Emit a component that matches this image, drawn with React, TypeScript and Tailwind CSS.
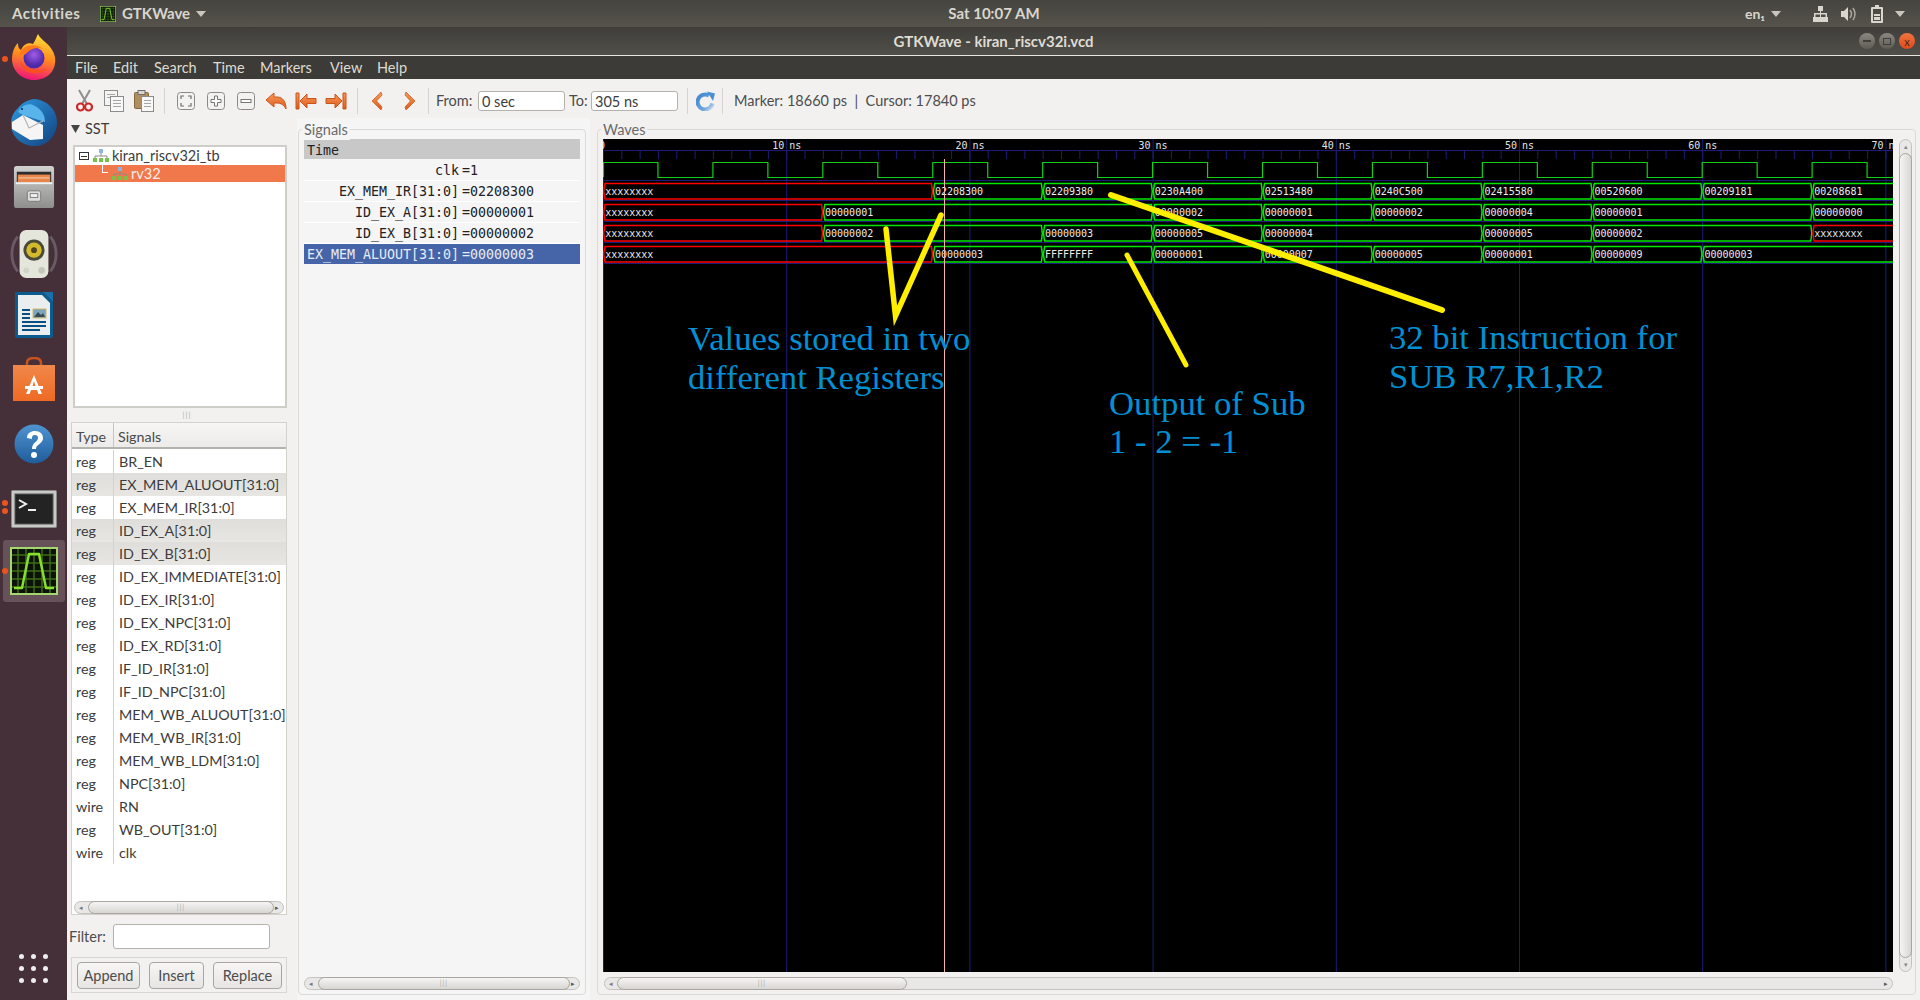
import React from "react";

const nsX = (t: number) => 18.32 * t;
type Seg = [number, number, string];
const rows: { y: number; segs: Seg[] }[] = [
  { y: 44.5, segs: [[0, 18, "xxxxxxxx"], [18, 24, "02208300"], [24, 30, "02209380"], [30, 36, "0230A400"], [36, 42, "02513480"], [42, 48, "0240C500"], [48, 54, "02415580"], [54, 60, "00520600"], [60, 66, "00209181"], [66, 74, "00208681"]] },
  { y: 65.5, segs: [[0, 12, "xxxxxxxx"], [12, 30, "00000001"], [30, 36, "00000002"], [36, 42, "00000001"], [42, 48, "00000002"], [48, 54, "00000004"], [54, 66, "00000001"], [66, 74, "00000000"]] },
  { y: 86.5, segs: [[0, 12, "xxxxxxxx"], [12, 24, "00000002"], [24, 30, "00000003"], [30, 36, "00000005"], [36, 48, "00000004"], [48, 54, "00000005"], [54, 66, "00000002"], [66, 74, "xxxxxxxx"]] },
  { y: 107.5, segs: [[0, 18, "xxxxxxxx"], [18, 24, "00000003"], [24, 30, "FFFFFFFF"], [30, 36, "00000001"], [36, 42, "00000007"], [42, 48, "00000005"], [48, 54, "00000001"], [54, 60, "00000009"], [60, 74, "00000003"]] },
];

function Waves() {
  const W = 1290;
  const H = 833;
  const navy = "#1c1c78";
  let clock = `M0.5 38 L0.5 23.5`;
  for (let i = 0; i < 24; i++) {
    const a = 3 * i;
    const x = nsX(a + 3);
    clock += i % 2 === 0 ? ` L${x} 23.5 L${x} 38.5` : ` L${x} 38.5 L${x} 23.5`;
  }
  const ticks = Array.from({ length: 71 }, (_, i) => nsX(i));
  const tens = [1, 2, 3, 4, 5, 6, 7];
  return (
    <svg width={W} height={H} viewBox={`0 0 ${W} ${H}`} className="block bg-black shrink-0">
      {[0, ...tens].map((t) => (
        <line key={t} x1={nsX(t * 10) + 0.5} x2={nsX(t * 10) + 0.5} y1={0} y2={H} stroke={navy} />
      ))}
      <line x1={0} x2={W} y1={11.5} y2={11.5} stroke={navy} />
      {ticks.map((x, i) => (
        <line key={i} x1={x + 0.5} x2={x + 0.5} y1={11} y2={20} stroke={navy} />
      ))}
      {[41.5, 61.5, 82.5, 103.5, 124.5].map((y) => (
        <line key={y} x1={0} x2={W} y1={y} y2={y} stroke={navy} />
      ))}
      {tens.map((t) => (
        <text key={t} y={9.5} fill="#e4e4e4" fontSize={10} fontFamily="'DejaVu Sans Mono',monospace">
          <tspan x={nsX(t * 10) - 14}>{t * 10}</tspan>
          <tspan x={nsX(t * 10) + 3}>ns</tspan>
        </text>
      ))}
      <text x={-4} y={9.5} fill="#e4e4e4" fontSize={10} fontFamily="'DejaVu Sans Mono',monospace">0</text>
      <path d={clock} fill="none" stroke="#14d014" strokeWidth={1.2} />
      {rows.map((r, ri) => (
        <g key={ri}>
          {r.segs.map(([a, b, t], i) => {
            const x0 = nsX(a);
            const x1 = nsX(b);
            const top = r.y;
            const bot = r.y + 15.5;
            const mid = (top + bot) / 2;
            const isX = t === "xxxxxxxx";
            const d = `M${x0 + 0.7} ${mid} L${x0 + 2} ${top} L${x1 - 1.3} ${top} L${x1 - 0.3} ${mid} L${x1 - 1.3} ${bot} L${x0 + 2} ${bot} Z`;
            return (
              <g key={i}>
                <path d={d} fill="none" stroke={isX ? "#ff0000" : "#00e800"} strokeWidth={1.5} />
                <text x={x0 + 2.2} y={top + 11} fill="#ececec" fontSize={10} fontFamily="'DejaVu Sans Mono',monospace">{t}</text>
              </g>
            );
          })}
        </g>
      ))}
      <line x1={341.5} x2={341.5} y1={20} y2={H} stroke="#f4b4a8" />
      <g stroke="#ffee00" fill="none" strokeLinecap="round" strokeLinejoin="miter">
        <path d="M283 90 L292.500 177 L338 76" strokeWidth={5.5} />
        <path d="M524 116 L583 226" strokeWidth={5} />
        <path d="M508 56 L839 171" strokeWidth={6} />
      </g>
    </svg>
  );
}

function HScroll({ thumbStart, thumbEnd, className }: { thumbStart: number; thumbEnd: number; className: string }) {
  return (
    <div className={`h-[13px] rounded-full border border-[#c4c2bd] bg-[#e9e8e6] flex items-center relative ${className}`}>
      <div className="text-[#777] text-[7px] leading-none pl-[4px]" style={{ width: thumbStart }}>◂</div>
      <div className="h-[13px] -my-px rounded-full border border-[#a9a69f] bg-gradient-to-b from-[#f6f5f4] to-[#d8d6d2] flex items-center justify-center" style={{ width: thumbEnd - thumbStart }}>
        <span className="text-[#aaa] text-[7px] leading-none tracking-[1px]">|||</span>
      </div>
      <div className="flex-1 text-[#555] text-[7px] leading-none text-right pr-[4px]">▸</div>
    </div>
  );
}

const Caret = ({ className }: { className: string }) => (
  <svg width="10" height="6" viewBox="0 0 10 6" className={`shrink-0 ${className}`}><path d="M0 0 H10 L5 6Z" fill="#c9c6bd" /></svg>
);

function Firefox() {
  return (
    <svg width="46" height="48" viewBox="0 0 46 48">
      <defs>
        <linearGradient id="ffa" x1="0.6" y1="0" x2="0.4" y2="1"><stop offset="0" stopColor="#ffe03a" /><stop offset="0.5" stopColor="#ff8a1e" /><stop offset="1" stopColor="#f0127a" /></linearGradient>
        <radialGradient id="ffb" cx="0.5" cy="0.35"><stop offset="0" stopColor="#a35ae8" /><stop offset="1" stopColor="#4f2aa8" /></radialGradient>
      </defs>
      <path d="M27 1 C30 8 41 11 44 24 C46 38 36 47 23 47 C10 47 1 37 1 26 C1 20 3 14 7 10 C7 14 8 16 10 17 C12 12 17 9 22 11 C24 8 25 5 27 1Z" fill="url(#ffa)" />
      <circle cx="23" cy="25" r="10.500" fill="url(#ffb)" />
      <path d="M8 21 C12 12 24 9 32 16 C27 14 22 15 18 18 C15 21 12 24 8 21Z" fill="#ff7a1c" />
      <path d="M9 28 C11 40 26 45 37 35 C28 39 16 38 9 28Z" fill="#f9501e" />
    </svg>
  );
}
function Thunderbird() {
  return (
    <svg width="50" height="50" viewBox="0 0 50 50">
      <defs><linearGradient id="tba" x1="0" y1="0" x2="1" y2="1"><stop offset="0" stopColor="#2e9be0" /><stop offset="1" stopColor="#12407f" /></linearGradient></defs>
      <path d="M25 1 C40 2 49 14 48 26 C47 40 36 49 24 48 C11 47 1 37 2 24 C3 16 6 13 9 10 C13 5 18 2 25 1Z" fill="url(#tba)" />
      <path d="M9 14 C13 7 20 4 26 8 C33 12 36 17 36 24 L14 17Z" fill="#58b4ea" />
      <path d="M3 24 L14 17 L34 27 L34 41 L21 42 L3 31Z" fill="#f5f5f5" />
      <path d="M14 17 L20 30 L34 23" fill="none" stroke="#b4b4b4" strokeWidth="1.200" />
      <circle cx="13" cy="11" r="1" fill="#0f2e50" />
    </svg>
  );
}
function Files() {
  return (
    <svg width="42" height="44" viewBox="0 0 44 46">
      <defs><linearGradient id="fia" x1="0" y1="0" x2="0" y2="1"><stop offset="0" stopColor="#d2d2d0" /><stop offset="1" stopColor="#8e8e8c" /></linearGradient></defs>
      <rect x="1" y="1" width="42" height="44" rx="3" fill="url(#fia)" />
      <rect x="4" y="7" width="36" height="11" fill="#2e2e2e" />
      <rect x="5" y="10" width="34" height="8" fill="#e8864a" />
      <rect x="6" y="13" width="32" height="1" fill="#f6d6b6" />
      <rect x="3" y="18" width="38" height="2" fill="#f2f2f2" />
      <rect x="15" y="27" width="14" height="11" rx="2" fill="#dcdcdc" stroke="#7a7a7a" />
      <rect x="18" y="30" width="8" height="4" fill="#eeeeee" stroke="#666" strokeWidth="0.800" />
    </svg>
  );
}
function Rhythmbox() {
  return (
    <svg width="48" height="50" viewBox="0 0 48 52">
      <path d="M7 8 C-1 18 -1 34 7 44 M41 8 C49 18 49 34 41 44" stroke="#6b5a66" strokeWidth="3" fill="none" />
      <rect x="9" y="1" width="30" height="50" rx="7" fill="#e4e6dc" />
      <circle cx="24" cy="22" r="11" fill="#4a4a3a" />
      <circle cx="24" cy="22" r="8" fill="#d4b92a" />
      <circle cx="24" cy="22" r="3" fill="#4a4520" />
      <circle cx="32" cy="43" r="3.500" fill="#c4c6bc" />
      <circle cx="16" cy="43" r="3" fill="#d2d4ca" />
    </svg>
  );
}
function Writer() {
  return (
    <svg width="40" height="48" viewBox="0 0 40 48">
      <path d="M2 1 H29 L39 11 V45 Q39 47 37 47 H3 Q1 47 1 45 V2 Q1 1 2 1Z" fill="#0b5b8f" />
      <path d="M4 4 H28 L36 12 V44 H4 Z" fill="#eaeeef" />
      <path d="M29 1 H39 V11Z" fill="#1a6fa8" />
      <rect x="8" y="18" width="8" height="2" fill="#0b4f80" />
      <rect x="8" y="22" width="8" height="2" fill="#0b4f80" />
      <rect x="8" y="26" width="8" height="2" fill="#0b4f80" />
      <rect x="8" y="30" width="24" height="2" fill="#0b4f80" />
      <rect x="8" y="34" width="24" height="2" fill="#0b4f80" />
      <rect x="8" y="38" width="18" height="2" fill="#0b4f80" />
      <rect x="19" y="18" width="13" height="9" fill="#7ea6bc" stroke="#d8b24a" strokeWidth="0.8" />
      <path d="M20 26 L24 21 L27 24 L29 22 L31 26Z" fill="#3a4a55" />
    </svg>
  );
}
function Software() {
  return (
    <svg width="42" height="44" viewBox="0 0 42 44">
      <defs><linearGradient id="swa" x1="0" y1="0" x2="0" y2="1"><stop offset="0" stopColor="#f0884a" /><stop offset="1" stopColor="#ee6a24" /></linearGradient></defs>
      <path d="M14 10 V6 Q14 1 21 1 Q28 1 28 6 V10" fill="none" stroke="#c9531e" strokeWidth="2.500" />
      <rect x="0" y="8" width="42" height="36" fill="url(#swa)" />
      <path d="M21 18 L13 37 H16.500 L18 33 H24 L25.500 37 H29 Z M19.500 29 L21 24 L22.500 29Z" fill="#fff" fillRule="evenodd" />
      <rect x="12" y="29" width="18" height="3" fill="#fff" />
    </svg>
  );
}
function Help() {
  return (
    <svg width="40" height="40" viewBox="0 0 40 40">
      <defs><linearGradient id="hea" x1="0" y1="0" x2="0" y2="1"><stop offset="0" stopColor="#4f94d0" /><stop offset="1" stopColor="#1f5c9c" /></linearGradient></defs>
      <circle cx="20" cy="20" r="19.500" fill="url(#hea)" />
      <path d="M13 14 C13 9 17 7 21 7 C26 7 29 10 29 14 C29 20 22 20 22 25 H18 C18 18 24 18 24 14 C24 12 23 11 21 11 C18 11 18 13 18 15 Z" fill="#fff" />
      <circle cx="20" cy="31" r="3" fill="#fff" />
    </svg>
  );
}
function Terminal() {
  return (
    <svg width="46" height="38" viewBox="0 0 46 38">
      <rect x="0.500" y="0.500" width="45" height="37" rx="1" fill="#c9c9c7" stroke="#8a8a88" />
      <rect x="4" y="4" width="38" height="30" fill="#232323" stroke="#555" />
      <path d="M8 10 L15 14 L8 18" fill="none" stroke="#f0f0f0" strokeWidth="2" />
      <rect x="17" y="19" width="8" height="2" fill="#f0f0f0" />
    </svg>
  );
}
function GtkIcon({ size }: { size: number }) {
  const g = [8, 16, 24, 32, 40];
  return (
    <svg width={size} height={size} viewBox="0 0 48 48" className="shrink-0">
      <rect x="0" y="0" width="48" height="48" fill="#a6d76e" />
      <rect x="2" y="2" width="44" height="44" fill="#0c1208" />
      {g.map((v) => <g key={v}><line x1={v} x2={v} y1="2" y2="46" stroke="#3c6c14" strokeWidth="1.500" /><line y1={v} y2={v} x1="2" x2="46" stroke="#3c6c14" strokeWidth="1.500" /></g>)}
      <path d="M4 41 H12 L19 7 H29 L36 41 H44" fill="none" stroke="#84e02c" strokeWidth="2.500" strokeLinejoin="round" />
    </svg>
  );
}

const Grad = ({ id }: { id: string }) => (
  <defs><linearGradient id={id} x1="0" y1="0" x2="0" y2="1"><stop offset="0" stopColor="#f79a5c" /><stop offset="1" stopColor="#dd5a1a" /></linearGradient></defs>
);
const Arrow = ({ d, id }: { d: string; id: string }) => (
  <svg width="22" height="18" viewBox="0 0 22 18" className="shrink-0"><Grad id={id} /><path d={d} fill={`url(#${id})`} stroke="#c9551c" strokeWidth="1" strokeLinejoin="round" /></svg>
);
const Chevron = ({ flip, id }: { flip?: boolean; id: string }) => (
  <svg width="12" height="20" viewBox="0 0 12 20" className="shrink-0"><Grad id={id} /><path d={flip ? "M2 1 L11 10 L2 19 L1 16 L6.500 10 L1 4Z" : "M10 1 L1 10 L10 19 L11 16 L5.500 10 L11 4Z"} fill={`url(#${id})`} stroke="#d2601f" strokeWidth="0.800" strokeLinejoin="round" /></svg>
);
const ZoomBtn = ({ kind }: { kind: "fit" | "in" | "out" }) => (
  <svg width="18" height="18" viewBox="0 0 18 18" className="shrink-0">
    <rect x="0.500" y="0.500" width="17" height="17" rx="3" fill="#f2f2f0" stroke="#8c8a86" />
    {kind === "fit" && <path d="M4 7 V4 H7 M11 4 H14 V7 M14 11 V14 H11 M7 14 H4 V11" fill="none" stroke="#6f6e6b" strokeWidth="1.200" />}
    {kind === "in" && <path d="M7.500 4 H10.500 V7.500 H14 V10.500 H10.500 V14 H7.500 V10.500 H4 V7.500 H7.500Z" fill="#fdfdfd" stroke="#77756f" />}
    {kind === "out" && <rect x="4" y="7.500" width="10" height="3" fill="#fdfdfd" stroke="#77756f" />}
  </svg>
);
const DocLines = () => (
  <g stroke="#a5a5a5" strokeWidth="1"><line x1="10" x2="17" y1="10.500" y2="10.500" /><line x1="10" x2="17" y1="13.500" y2="13.500" /><line x1="10" x2="17" y1="16.500" y2="16.500" /></g>
);
const Sep = ({ className }: { className: string }) => <div className={`w-px h-[26px] bg-[#d6d4d0] shrink-0 ${className}`} />;

const list: [string, string, boolean][] = [
  ["reg", "BR_EN", false], ["reg", "EX_MEM_ALUOUT[31:0]", true], ["reg", "EX_MEM_IR[31:0]", false], ["reg", "ID_EX_A[31:0]", true], ["reg", "ID_EX_B[31:0]", true],
  ["reg", "ID_EX_IMMEDIATE[31:0]", false], ["reg", "ID_EX_IR[31:0]", false], ["reg", "ID_EX_NPC[31:0]", false], ["reg", "ID_EX_RD[31:0]", false], ["reg", "IF_ID_IR[31:0]", false],
  ["reg", "IF_ID_NPC[31:0]", false], ["reg", "MEM_WB_ALUOUT[31:0]", false], ["reg", "MEM_WB_IR[31:0]", false], ["reg", "MEM_WB_LDM[31:0]", false], ["reg", "NPC[31:0]", false],
  ["wire", "RN", false], ["reg", "WB_OUT[31:0]", false], ["wire", "clk", false],
];
const values: [string, string][] = [["clk", "=1"], ["EX_MEM_IR[31:0]", "=02208300"], ["ID_EX_A[31:0]", "=00000001"], ["ID_EX_B[31:0]", "=00000002"]];

const Hier = () => (
  <svg width="16" height="14" viewBox="0 0 16 14" className="shrink-0">
    <rect x="6" y="0" width="4" height="4" fill="#8fb4e0" />
    <path d="M8 4 V7 M2 9 V7 H14 V9" stroke="#8a8a8a" fill="none" />
    <rect x="0" y="9" width="4" height="4" fill="#79c24a" /><rect x="6" y="9" width="4" height="4" fill="#79c24a" /><rect x="12" y="9" width="4" height="4" fill="#79c24a" />
  </svg>
);

export default function App() {
  return (
    <div className="w-[1920px] h-[1000px] overflow-hidden flex flex-col font-['Lato','Noto_Sans',sans-serif] text-[#3c3c3c] relative">
      <div className="h-[27px] shrink-0 bg-gradient-to-b from-[#45443f] to-[#55534c] flex items-center text-[#d9d6cd] text-[15px] font-bold pl-[12px] pr-[15px] relative">
        <span className="w-[88px] tracking-[0.6px]">Activities</span>
        <GtkIcon size={16} />
        <span className="ml-[6px]">GTKWave</span>
        <Caret className="ml-[6px]" />
        <span className="absolute left-[948px] w-[92px] text-center">Sat 10:07 AM</span>
        <div className="ml-auto flex items-center">
          <span className="text-[14px]">en₁</span>
          <Caret className="ml-[6px]" />
          <svg width="15" height="16" viewBox="0 0 15 16" className="ml-[32px]"><path d="M5 0 H10 V5 H8 V7 H14 V11 H15 V16 H10 V11 H12.500 V8.500 H8 V11 H10 V16 H5 V11 H7 V8.500 H2.500 V11 H5 V16 H0 V11 H1 V7 H7 V5 H5Z" fill="#d9d6cd" /></svg>
          <svg width="15" height="14" viewBox="0 0 15 14" className="ml-[13px]"><path d="M0 4 H3 L7 0 V14 L3 10 H0Z" fill="#d9d6cd" /><path d="M9 3 Q12 7 9 11 M12 1 Q16 7 12 13" stroke="#a9a69e" strokeWidth="1.500" fill="none" /></svg>
          <svg width="12" height="18" viewBox="0 0 12 18" className="ml-[15px]"><path d="M4 0 H8 V2 H11 Q12 2 12 3 V17 Q12 18 11 18 H1 Q0 18 0 17 V3 Q0 2 1 2 H4Z M2 4 V16 H10 V4Z" fill="#d9d6cd" fillRule="evenodd" /><rect x="3" y="9" width="6" height="2" fill="#d9d6cd" /><rect x="3" y="12" width="6" height="3" fill="#d9d6cd" /></svg>
          <Caret className="ml-[12px]" />
        </div>
      </div>
      <div className="flex-1 flex min-h-0">
        <div className="w-[67px] shrink-0 bg-[#452f38] flex flex-col items-center relative">
          <div className="h-[54px] flex items-end"><Firefox /></div>
          <div className="mt-[17px]"><Thunderbird /></div>
          <div className="mt-[17px]"><Files /></div>
          <div className="mt-[20px]"><Rhythmbox /></div>
          <div className="mt-[12px]"><Writer /></div>
          <div className="mt-[18px]"><Software /></div>
          <div className="mt-[23px]"><Help /></div>
          <div className="mt-[26px]"><Terminal /></div>
          <div className="mt-[12px] w-[62px] h-[62px] rounded-[3px] bg-[#685259] flex items-center justify-center"><GtkIcon size={48} /></div>
          <div className="mt-auto mb-[17px] grid grid-cols-3 gap-x-[7px] gap-y-[7px]">
            {Array.from({ length: 9 }, (_, i) => <div key={i} className="w-[5px] h-[5px] rounded-full bg-[#eeeeee]" />)}
          </div>
          <div className="absolute left-[2px] top-[29px] w-[6px] h-[6px] rounded-full bg-[#e95420]" />
          <div className="absolute left-[2px] top-[473px] w-[6px] h-[6px] rounded-full bg-[#e95420]" />
          <div className="absolute left-[2px] top-[481px] w-[6px] h-[6px] rounded-full bg-[#e95420]" />
          <div className="absolute left-[2px] top-[541px] w-[6px] h-[6px] rounded-full bg-[#e95420]" />
        </div>
        <div className="flex-1 min-w-0 flex flex-col">
          <div className="h-[28px] shrink-0 bg-gradient-to-b from-[#3f3e3a] to-[#504f49] flex items-center relative">
            <span className="w-full text-center text-[#dfdbd2] text-[15px] font-bold">GTKWave - kiran_riscv32i.vcd</span>
            <div className="absolute right-[5px] top-[6px] flex gap-[4px]">
              <div className="w-[16px] h-[16px] rounded-full bg-gradient-to-b from-[#8a8880] to-[#5e5c55] flex items-center justify-center"><div className="w-[8px] h-[2px] bg-[#3f3e3a]" /></div>
              <div className="w-[16px] h-[16px] rounded-full bg-gradient-to-b from-[#8a8880] to-[#5e5c55] flex items-center justify-center"><div className="w-[8px] h-[7px] border border-[#3f3e3a]" /></div>
              <div className="w-[16px] h-[16px] rounded-full bg-gradient-to-b from-[#f0743e] to-[#dc4a1c] flex items-center justify-center text-[#4a2a1a] text-[11px] leading-none">x</div>
            </div>
          </div>
          <div className="h-px shrink-0 bg-[#e8e6e0]" />
          <div className="h-[23px] shrink-0 bg-[#3c3b37] flex items-center pl-[8px] text-[#dfdbd2] text-[14.5px]">
            <span className="w-[38px]">File</span>
            <span className="w-[41px]">Edit</span>
            <span className="w-[59px]">Search</span>
            <span className="w-[47px]">Time</span>
            <span className="w-[70px]">Markers</span>
            <span className="w-[47px]">View</span>
            <span>Help</span>
          </div>
          <div className="h-[39px] shrink-0 bg-[#f2f1f0] flex items-center text-[14.5px] text-[#4c4c4c] pt-[4px]">
            <svg width="17" height="23" viewBox="0 0 17 23" className="ml-[9px] shrink-0">
              <path d="M3 1 L11 15 M14 1 L6 15" stroke="#8f8f8f" strokeWidth="2" />
              <circle cx="4.500" cy="18" r="3.500" fill="none" stroke="#cc2a2a" strokeWidth="2.200" />
              <circle cx="12.500" cy="18" r="3.500" fill="none" stroke="#cc2a2a" strokeWidth="2.200" />
            </svg>
            <svg width="20" height="22" viewBox="0 0 20 22" className="ml-[11px] shrink-0">
              <rect x="0.500" y="0.500" width="13" height="15" fill="#f4f4f4" stroke="#8c8c8c" />
              <g stroke="#a5a5a5"><line x1="3" x2="11" y1="4.500" y2="4.500" /><line x1="3" x2="11" y1="7.500" y2="7.500" /></g>
              <rect x="6.500" y="6.500" width="13" height="15" fill="#f8f8f8" stroke="#8c8c8c" />
              <g stroke="#a5a5a5"><line x1="9" x2="17" y1="10.500" y2="10.500" /><line x1="9" x2="17" y1="13.500" y2="13.500" /><line x1="9" x2="17" y1="16.500" y2="16.500" /></g>
            </svg>
            <svg width="20" height="22" viewBox="0 0 20 22" className="ml-[10px] shrink-0">
              <rect x="0.500" y="2.500" width="14" height="16" rx="1" fill="#b08e62" stroke="#84663f" />
              <rect x="4" y="0.500" width="7" height="4" fill="#d9d4ca" stroke="#6e6e6e" />
              <rect x="7.500" y="6.500" width="12" height="15" fill="#f8f8f8" stroke="#8c8c8c" />
              <DocLines />
            </svg>
            <Sep className="ml-[10px]" />
            <div className="ml-[12px] flex items-center gap-[12px]"><ZoomBtn kind="fit" /><ZoomBtn kind="in" /><ZoomBtn kind="out" /></div>
            <div className="ml-[10px] flex items-center gap-[8px]">
              <Arrow id="ar1" d="M1 8 L9 1 V5 H12 C18 5 21 10 21 17 C19 13 16 11 12 11 H9 V15 Z" />
              <Arrow id="ar2" d="M1 1 H4 V17 H1Z M5 9 L12 2 V6.500 H21 V11.500 H12 V16Z" />
              <Arrow id="ar3" d="M21 1 H18 V17 H21Z M17 9 L10 2 V6.500 H1 V11.500 H10 V16Z" />
            </div>
            <Sep className="ml-[10px]" />
            <div className="ml-[13px]"><Chevron id="ch1" /></div>
            <div className="ml-[21px]"><Chevron id="ch2" flip /></div>
            <Sep className="ml-[12px]" />
            <span className="ml-[7px] w-[42px]">From:</span>
            <div className="w-[87px] h-[20px] bg-white border border-[#b5b2ac] rounded-[3px] px-[3px] leading-[19px] text-[#3c3c3c]">0 sec</div>
            <span className="ml-[4px] w-[22px]">To:</span>
            <div className="w-[87px] h-[20px] bg-white border border-[#b5b2ac] rounded-[3px] px-[3px] leading-[19px] text-[#3c3c3c]">305 ns</div>
            <Sep className="ml-[9px]" />
            <svg width="20" height="20" viewBox="0 0 20 20" className="ml-[8px] shrink-0">
              <defs><linearGradient id="rfa" x1="0" y1="0" x2="1" y2="1"><stop offset="0" stopColor="#3f86cf" /><stop offset="0.7" stopColor="#6fa6dc" /><stop offset="1" stopColor="#d4e2f0" /></linearGradient></defs>
              <path d="M16.500 12.500 A7.500 7.500 0 1 1 13 4.500" fill="none" stroke="url(#rfa)" strokeWidth="4" />
              <path d="M11 0.500 L19 2.500 L17 10Z" fill="#4a8fd2" />
            </svg>
            <Sep className="ml-[6px]" />
            <span className="ml-[11px] whitespace-pre">Marker: 18660 ps  |  Cursor: 17840 ps</span>
          </div>
          <div className="flex-1 min-h-0 flex bg-[#f2f1f0]">
            <div className="w-[230px] shrink-0 flex flex-col">
              <div className="h-[27px] shrink-0 flex items-start pl-[4px] text-[14.5px]">
                <svg width="9" height="8" viewBox="0 0 9 8" className="mt-[7px] shrink-0"><path d="M0 0 H9 L4.500 8Z" fill="#444" /></svg>
                <span className="ml-[5px] leading-[20px] mt-[1px]">SST</span>
              </div>
              <div className="ml-[6px] w-[214px] h-[263px] shrink-0 bg-white border-2 border-[#cfcdc8] text-[14.5px]">
                <div className="h-[18px] flex items-center pl-[3px] relative">
                  <div className="w-[10px] h-[8px] border border-[#333] ml-[1px] flex items-center justify-center"><div className="w-[6px] h-px bg-[#333]" /></div>
                  <div className="ml-[4px]"><Hier /></div>
                  <span className="ml-[3px] text-[#3c3c3c]">kiran_riscv32i_tb</span>
                </div>
                <div className="h-[17px] bg-[#f0784a] flex items-center pl-[37px] text-[#fbeee8] relative">
                  <div className="absolute left-[27px] top-0 w-[6px] h-[8px] border-l border-b border-white" />
                  <Hier />
                  <span className="ml-[3px]">rv32</span>
                </div>
              </div>
              <div className="h-[14px] shrink-0 flex items-center justify-center text-[#b5b2ac] text-[8px] tracking-[1px] leading-none pl-[10px]">|||</div>
              <div className="ml-[4px] w-[216px] h-[493px] shrink-0 bg-white border border-[#d4d2cd] flex flex-col text-[14.3px] relative">
                <div className="h-[26px] shrink-0 bg-gradient-to-b from-[#f7f6f5] to-[#ecebe9] border-b-2 border-[#b4b2ad] flex text-[#4a4a4a]">
                  <span className="w-[42px] pl-[4px] border-r border-[#c8c6c2] h-full flex items-center pt-[3px]">Type</span>
                  <span className="pl-[4px] flex items-center pt-[3px]">Signals</span>
                </div>
                <div className="h-px shrink-0" />
                {list.map(([a, b, sel], i) => (
                  <div key={i} className={`h-[23px] shrink-0 flex items-center ${sel ? "bg-gradient-to-b from-[#dfdedb] to-[#e7e6e3]" : "bg-white"}`}>
                    <span className="w-[42px] pl-[4px] shrink-0 border-r border-[#d4d2cd] h-full flex items-center">{a}</span>
                    <span className="pl-[5px] whitespace-nowrap">{b}</span>
                  </div>
                ))}
                <HScroll thumbStart={13} thumbEnd={199} className="mt-auto mx-[2px] shrink-0" />
              </div>
              <div className="h-[42px] shrink-0 flex items-center pl-[2px] pt-[1px]">
                <span className="w-[44px] text-[14.5px] text-[#4c4c4c]">Filter:</span>
                <div className="w-[157px] h-[25px] bg-white border border-[#b5b2ac] rounded-[3px]" />
              </div>
              <div className="ml-[4px] w-[216px] h-[36px] shrink-0 border border-[#d8d6d2] flex items-center pl-[5px] gap-[9px] text-[14.5px] text-[#4c4c4c]">
                <div className="w-[63px] h-[27px] rounded-[4px] border border-[#a9a69f] bg-gradient-to-b from-[#f7f6f5] to-[#e7e5e2] flex items-center justify-center pt-[2px]">Append</div>
                <div className="w-[55px] h-[27px] rounded-[4px] border border-[#a9a69f] bg-gradient-to-b from-[#f7f6f5] to-[#e7e5e2] flex items-center justify-center pt-[2px]">Insert</div>
                <div className="w-[69px] h-[27px] rounded-[4px] border border-[#a9a69f] bg-gradient-to-b from-[#f7f6f5] to-[#e7e5e2] flex items-center justify-center pt-[2px]">Replace</div>
              </div>
            </div>
            <div className="w-[293px] shrink-0 bg-[#f5f5f5] pl-[1px] pr-[4px] pt-[11px] pb-[5px] flex">
              <div className="flex-1 border border-[#dcdad6] rounded-[4px] relative flex flex-col px-[5px] pt-[9px] pb-[4px]">
                <span className="absolute left-[3px] -top-[10px] bg-[#f5f5f5] px-[2px] text-[14.5px] leading-[20px] text-[#6a6a6a]">Signals</span>
                <div className="font-['DejaVu_Sans_Mono',monospace] text-[13.3px] text-[#222]">
                  <div className="h-[20px] bg-[#c8c8c8] pl-[3px] leading-[24px] mb-px">Time</div>
                  {values.map(([n, v]) => (
                    <div key={n} className="h-[20px] leading-[22px] flex mb-px shadow-[0_1px_0_#ffffff]">
                      <span className="w-[155px] text-right shrink-0">{n}</span>
                      <span className="ml-[3px]">{v}</span>
                    </div>
                  ))}
                  <div className="h-[20px] leading-[22px] flex bg-[#4565a8] text-[#e6ecf7]">
                    <span className="w-[155px] text-right shrink-0 whitespace-nowrap">EX_MEM_ALUOUT[31:0]</span>
                    <span className="ml-[3px]">=00000003</span>
                  </div>
                </div>
                <HScroll thumbStart={13} thumbEnd={265} className="mt-auto shrink-0" />
              </div>
            </div>
            <div className="flex-1 min-w-0 pl-[7px] pt-[11px] pb-[5px] pr-[4px]">
              <div className="h-full border border-[#dcdad6] rounded-[4px] relative flex flex-col pl-[5px] pt-[9px] pb-[4px]">
                <span className="absolute left-[3px] -top-[10px] bg-[#f2f1f0] px-[2px] text-[14.5px] leading-[20px] text-[#6a6a6a]">Waves</span>
                <div className="flex relative">
                  <Waves />
                  <div className="ml-[6px] w-[13px] rounded-full border border-[#c4c2bd] bg-[#e9e8e6] flex flex-col">
                    <div className="h-[13px] text-[7px] text-[#888] text-center leading-[13px]">▴</div>
                    <div className="flex-1 rounded-full border border-[#a9a69f] bg-gradient-to-r from-[#f6f5f4] to-[#d8d6d2] -mx-px" />
                    <div className="h-[13px] text-[7px] text-[#888] text-center leading-[13px]">▾</div>
                  </div>
                  <div className="absolute left-[85px] top-[181px] text-[34.7px] leading-[38.5px] text-[#0090d4] font-['Liberation_Serif',serif] whitespace-nowrap">Values stored in two<br />different Registers</div>
                  <div className="absolute left-[506px] top-[246px] text-[34.7px] leading-[38px] text-[#0090d4] font-['Liberation_Serif',serif] whitespace-nowrap">Output of Sub<br />1 - 2 = -1</div>
                  <div className="absolute left-[786px] top-[180px] text-[34.7px] leading-[38.5px] text-[#0090d4] font-['Liberation_Serif',serif] whitespace-nowrap">32 bit Instruction for<br />SUB R7,R1,R2</div>
                </div>
                <HScroll thumbStart={12} thumbEnd={302} className="mt-auto ml-[1px] w-[1289px] shrink-0" />
              </div>
            </div>
          </div>
        </div>
      </div>
    </div>
  );
}
